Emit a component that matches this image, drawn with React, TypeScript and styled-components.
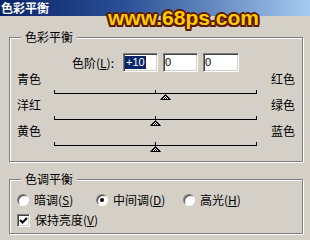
import React, { useId } from "react";
import styled, { createGlobalStyle } from "styled-components";

const Global = createGlobalStyle`
  html, body { margin: 0; padding: 0; background: #d4d0c8; }
  body {
    font-family: "Noto Sans CJK SC", "Noto Sans", sans-serif;
    font-size: 12px;
    color: #000;
  }
`;

const Dialog = styled.div`
  position: relative;
  width: 310px;
  height: 240px;
  overflow: hidden;
  background: #d4d0c8;
  display: flex;
  flex-direction: column;
`;

const TitleBar = styled.div`
  flex: none;
  height: 16px;
  padding-left: 1px;
  background: linear-gradient(to right, #0a246a 0%, #2a4f94 40%, #a6caf0 100%);
  color: #fff;
  font-weight: 700;
  font-size: 12px;
  line-height: 16px;
`;

const Watermark = styled.div`
  position: absolute;
  left: 108px;
  top: 7px;
  font-family: "Liberation Sans", Arial, sans-serif;
  font-weight: 700;
  font-size: 21px;
  line-height: 21px;
  white-space: nowrap;
  color: #ffcc00;
  pointer-events: none;
  text-shadow:
    2px 0 0 #5a1a00, -2px 0 0 #5a1a00, 0 2px 0 #5a1a00, 0 -2px 0 #5a1a00,
    1.5px 1.5px 0 #5a1a00, -1.5px 1.5px 0 #5a1a00, 1.5px -1.5px 0 #5a1a00,
    -1.5px -1.5px 0 #5a1a00;
`;

const Body = styled.div`
  display: flex;
  flex-direction: column;
  gap: 10px;
  padding: 14px 0 0 9px;
`;

const Group = styled.fieldset<{ $h: number; $pt: number }>`
  box-sizing: border-box;
  width: 294px;
  height: ${(p) => p.$h}px;
  margin: 0;
  padding: ${(p) => p.$pt}px 7px 0 7px;
  min-inline-size: 0;
  border: 1px solid #808080;
  box-shadow: inset 1px 1px 0 #fff, 1px 1px 0 #fff;
`;

const Legend = styled.legend`
  margin-left: 4px;
  padding: 0 4px;
  font-size: 12px;
  line-height: 14px;
  background: #d4d0c8;
`;

const LevelRow = styled.div`
  display: flex;
  align-items: center;
  height: 19px;
  padding-left: 55px;
`;

const LevelLabel = styled.span`
  width: 51px;
  line-height: 14px;
  white-space: nowrap;
`;

const Fields = styled.div`
  display: flex;
  gap: 5px;
`;

const Field = styled.div<{ $w: number }>`
  box-sizing: border-box;
  width: ${(p) => p.$w}px;
  height: 19px;
  padding: 2px 0 0 1px;
  background: #fff;
  border: 1px solid;
  border-color: #808080 #fff #fff #808080;
  box-shadow: inset 1px 1px 0 #404040, inset -1px -1px 0 #d4d0c8;
  font-family: "Liberation Sans", Arial, sans-serif;
  font-size: 11px;
  line-height: 13px;
`;

const Selected = styled.span`
  display: inline-block;
  padding: 0 1px;
  background: #0a246a;
  color: #fff;
`;

const Slider = styled.div`
  display: flex;
  flex-direction: column;
  &:first-of-type {
    margin-top: 3px;
  }
`;

const LabelRow = styled.div`
  display: flex;
  justify-content: space-between;
  height: 14px;
  line-height: 14px;
`;

const Track = styled.div`
  position: relative;
  height: 7px;
  margin: 0 38px 4px 37px;
  border-bottom: 1px solid #000;
  background-image: linear-gradient(#000, #000), linear-gradient(#000, #000),
    linear-gradient(#000, #000);
  background-size: 1px 3px;
  background-repeat: no-repeat;
  background-position: 0 100%, 50% 100%, 100% 100%;
`;

const ThumbSvg = styled.svg`
  position: absolute;
  top: 8px;
  display: block;
`;

const OptionRow = styled.div`
  display: grid;
  grid-template-columns: 79px 87px auto;
  height: 14px;
  align-items: center;
`;

const Option = styled.div`
  display: flex;
  align-items: center;
  gap: 5px;
  line-height: 14px;
  white-space: nowrap;
`;

const Radio = styled.span<{ $on: boolean }>`
  box-sizing: border-box;
  width: 12px;
  height: 12px;
  border-radius: 50%;
  background: #fff;
  border: 1px solid;
  border-color: #808080 #fff #fff #808080;
  box-shadow: inset 1px 1px 0 #404040;
  display: grid;
  place-items: center;
  &::after {
    content: "";
    width: 4px;
    height: 4px;
    border-radius: 50%;
    background: ${(p) => (p.$on ? "#000" : "transparent")};
  }
`;

const CheckRow = styled.div`
  display: flex;
  align-items: center;
  gap: 5px;
  height: 14px;
  margin-top: 6px;
  line-height: 14px;
`;

const CheckBox = styled.span`
  box-sizing: border-box;
  width: 13px;
  height: 13px;
  background: #fff;
  border: 1px solid;
  border-color: #808080 #fff #fff #808080;
  box-shadow: inset 1px 1px 0 #404040, inset -1px -1px 0 #d4d0c8;
  display: grid;
  place-items: center;
`;

const TRACK_W = 203;

function Thumb({ value }: { value: number }) {
  const id = useId().replace(/:/g, "");
  const center = Math.round((TRACK_W - 1) / 2 + (value / 100) * ((TRACK_W - 1) / 2));
  return (
    <ThumbSvg width="11" height="6" viewBox="0 0 11 6" style={{ left: center - 5 }}>
      <defs>
        <pattern id={id} width="2" height="2" patternUnits="userSpaceOnUse">
          <rect width="2" height="2" fill="#fff" />
          <rect width="1" height="1" fill="#000" />
          <rect x="1" y="1" width="1" height="1" fill="#000" />
        </pattern>
      </defs>
      <polygon points="5.5,0.5 10.5,5.5 0.5,5.5" fill={`url(#${id})`} stroke="#000" strokeWidth="1" />
    </ThumbSvg>
  );
}

const sliders = [
  { left: "青色", right: "红色", value: 10 },
  { left: "洋红", right: "绿色", value: 0 },
  { left: "黄色", right: "蓝色", value: 0 },
];

export default function App() {
  return (
    <>
      <Global />
      <Dialog>
        <TitleBar>色彩平衡</TitleBar>
        <Body>
          <Group $h={132} $pt={9}>
            <Legend>色彩平衡</Legend>
            <LevelRow>
              <LevelLabel>
                色阶(<u>L</u>):
              </LevelLabel>
              <Fields>
                <Field $w={35}>
                  <Selected>+10</Selected>
                </Field>
                <Field $w={35}>0</Field>
                <Field $w={36}>0</Field>
              </Fields>
            </LevelRow>
            {sliders.map((s) => (
              <Slider key={s.left}>
                <LabelRow>
                  <span>{s.left}</span>
                  <span>{s.right}</span>
                </LabelRow>
                <Track>
                  <Thumb value={s.value} />
                </Track>
              </Slider>
            ))}
          </Group>
          <Group $h={62} $pt={7}>
            <Legend>色调平衡</Legend>
            <OptionRow>
              <Option>
                <Radio $on={false} />
                <span>
                  暗调(<u>S</u>)
                </span>
              </Option>
              <Option>
                <Radio $on={true} />
                <span>
                  中间调(<u>D</u>)
                </span>
              </Option>
              <Option>
                <Radio $on={false} />
                <span>
                  高光(<u>H</u>)
                </span>
              </Option>
            </OptionRow>
            <CheckRow>
              <CheckBox>
                <svg width="9" height="9" viewBox="0 0 9 9">
                  <polyline points="1,4 3.5,6.5 8,2" fill="none" stroke="#000" strokeWidth="2" />
                </svg>
              </CheckBox>
              <span>
                保持亮度(<u>V</u>)
              </span>
            </CheckRow>
          </Group>
        </Body>
        <Watermark>www.68ps.com</Watermark>
      </Dialog>
    </>
  );
}
